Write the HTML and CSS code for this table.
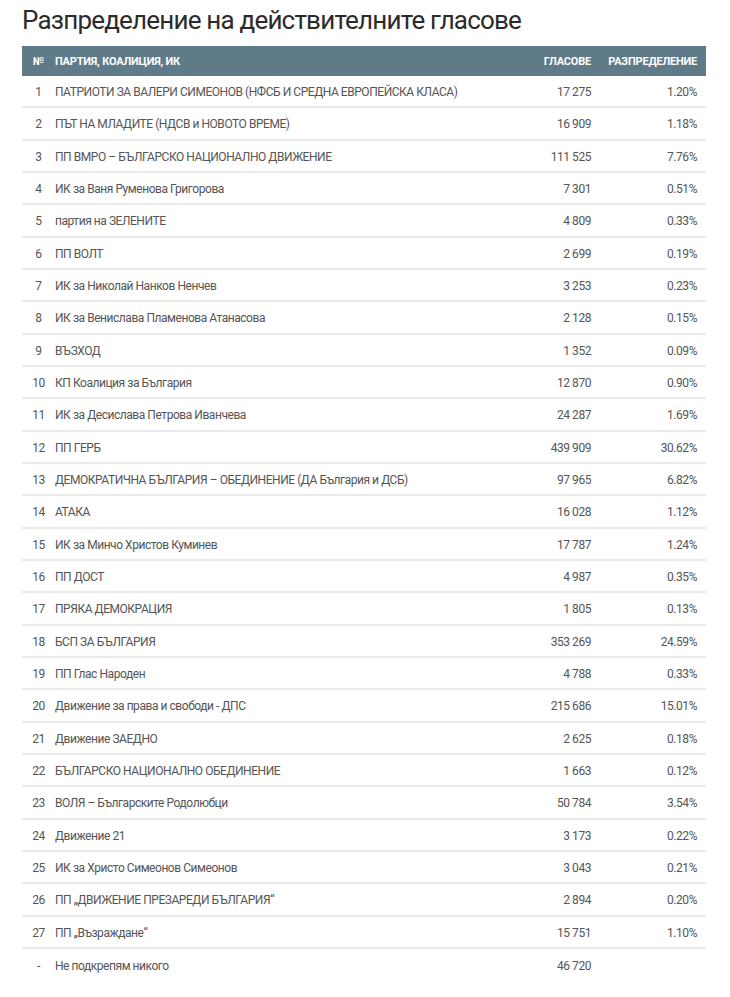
FILE: index.html
```html
<!DOCTYPE html>
<html lang="bg">
<head>
<meta charset="utf-8">
<title>Разпределение на действителните гласове</title>
<link rel="stylesheet" href="styles.css">
</head>
<body>
<div class="wrap">
  <h1 class="title">Разпределение на действителните гласове</h1>
  <table class="votes">
    <thead>
      <tr><th class="num">№</th><th class="party">Партия, коалиция, ИК</th><th class="cnt">Гласове</th><th class="pct">Разпределение</th></tr>
    </thead>
    <tbody>
      <tr><td class="num">1</td><td class="party">ПАТРИОТИ ЗА ВАЛЕРИ СИМЕОНОВ (НФСБ И СРЕДНА ЕВРОПЕЙСКА КЛАСА)</td><td class="cnt">17 275</td><td class="pct">1.20%</td></tr>
      <tr><td class="num">2</td><td class="party">ПЪТ НА МЛАДИТЕ (НДСВ и НОВОТО ВРЕМЕ)</td><td class="cnt">16 909</td><td class="pct">1.18%</td></tr>
      <tr><td class="num">3</td><td class="party">ПП ВМРО – БЪЛГАРСКО НАЦИОНАЛНО ДВИЖЕНИЕ</td><td class="cnt">111 525</td><td class="pct">7.76%</td></tr>
      <tr><td class="num">4</td><td class="party">ИК за Ваня Руменова Григорова</td><td class="cnt">7 301</td><td class="pct">0.51%</td></tr>
      <tr><td class="num">5</td><td class="party">партия на ЗЕЛЕНИТЕ</td><td class="cnt">4 809</td><td class="pct">0.33%</td></tr>
      <tr><td class="num">6</td><td class="party">ПП ВОЛТ</td><td class="cnt">2 699</td><td class="pct">0.19%</td></tr>
      <tr><td class="num">7</td><td class="party">ИК за Николай Нанков Ненчев</td><td class="cnt">3 253</td><td class="pct">0.23%</td></tr>
      <tr><td class="num">8</td><td class="party">ИК за Венислава Пламенова Атанасова</td><td class="cnt">2 128</td><td class="pct">0.15%</td></tr>
      <tr><td class="num">9</td><td class="party">ВЪЗХОД</td><td class="cnt">1 352</td><td class="pct">0.09%</td></tr>
      <tr><td class="num">10</td><td class="party">КП Коалиция за България</td><td class="cnt">12 870</td><td class="pct">0.90%</td></tr>
      <tr><td class="num">11</td><td class="party">ИК за Десислава Петрова Иванчева</td><td class="cnt">24 287</td><td class="pct">1.69%</td></tr>
      <tr><td class="num">12</td><td class="party">ПП ГЕРБ</td><td class="cnt">439 909</td><td class="pct">30.62%</td></tr>
      <tr><td class="num">13</td><td class="party">ДЕМОКРАТИЧНА БЪЛГАРИЯ – ОБЕДИНЕНИЕ (ДА България и ДСБ)</td><td class="cnt">97 965</td><td class="pct">6.82%</td></tr>
      <tr><td class="num">14</td><td class="party">АТАКА</td><td class="cnt">16 028</td><td class="pct">1.12%</td></tr>
      <tr><td class="num">15</td><td class="party">ИК за Минчо Христов Куминев</td><td class="cnt">17 787</td><td class="pct">1.24%</td></tr>
      <tr><td class="num">16</td><td class="party">ПП ДОСТ</td><td class="cnt">4 987</td><td class="pct">0.35%</td></tr>
      <tr><td class="num">17</td><td class="party">ПРЯКА ДЕМОКРАЦИЯ</td><td class="cnt">1 805</td><td class="pct">0.13%</td></tr>
      <tr><td class="num">18</td><td class="party">БСП ЗА БЪЛГАРИЯ</td><td class="cnt">353 269</td><td class="pct">24.59%</td></tr>
      <tr><td class="num">19</td><td class="party">ПП Глас Народен</td><td class="cnt">4 788</td><td class="pct">0.33%</td></tr>
      <tr><td class="num">20</td><td class="party">Движение за права и свободи - ДПС</td><td class="cnt">215 686</td><td class="pct">15.01%</td></tr>
      <tr><td class="num">21</td><td class="party">Движение ЗАЕДНО</td><td class="cnt">2 625</td><td class="pct">0.18%</td></tr>
      <tr><td class="num">22</td><td class="party">БЪЛГАРСКО НАЦИОНАЛНО ОБЕДИНЕНИЕ</td><td class="cnt">1 663</td><td class="pct">0.12%</td></tr>
      <tr><td class="num">23</td><td class="party">ВОЛЯ – Българските Родолюбци</td><td class="cnt">50 784</td><td class="pct">3.54%</td></tr>
      <tr><td class="num">24</td><td class="party">Движение 21</td><td class="cnt">3 173</td><td class="pct">0.22%</td></tr>
      <tr><td class="num">25</td><td class="party">ИК за Христо Симеонов Симеонов</td><td class="cnt">3 043</td><td class="pct">0.21%</td></tr>
      <tr><td class="num">26</td><td class="party">ПП „ДВИЖЕНИЕ ПРЕЗАРЕДИ БЪЛГАРИЯ“</td><td class="cnt">2 894</td><td class="pct">0.20%</td></tr>
      <tr><td class="num">27</td><td class="party">ПП „Възраждане“</td><td class="cnt">15 751</td><td class="pct">1.10%</td></tr>
      <tr class="last"><td class="num">-</td><td class="party">Не подкрепям никого</td><td class="cnt">46 720</td><td class="pct"></td></tr>
    </tbody>
  </table>
</div>
</body>
</html>
```

FILE: styles.css
```css
html, body {
  margin: 0;
  padding: 0;
  background: #ffffff;
}

.wrap {
  margin-left: 22px;
  width: 684px;
  font-family: Roboto, "Noto Sans", "Liberation Sans", sans-serif;
}

.title {
  margin: 0;
  padding-top: 5px;
  height: 46px;
  font-size: 26px;
  line-height: 30px;
  font-weight: 400;
  color: #2b2b2b;
  letter-spacing: -0.8px;
  box-sizing: border-box;
  white-space: nowrap;
}

.votes {
  width: 684px;
  border-collapse: collapse;
  table-layout: fixed;
  font-size: 12px;
  letter-spacing: -0.45px;
  color: #555555;
}

.votes thead th {
  background: #5f7b89;
  color: #ffffff;
  height: 30px;
  padding: 0;
  font-size: 11px;
  font-weight: 700;
  text-transform: uppercase;
  letter-spacing: -0.2px;
  vertical-align: middle;
}

.votes td {
  height: 28.33px;
  padding: 2px 0 0 0;
  border-bottom: 2px solid #e9e9e9;
  vertical-align: middle;
  white-space: nowrap;
}

.votes tr.last td {
  border-bottom: none;
  height: 30px;
}

.num {
  width: 33px;
  text-align: center;
}

.party {
  text-align: left;
}

.cnt {
  width: 110px;
  text-align: right;
}

.pct {
  width: 106px;
  text-align: right;
}

.votes th.pct,
.votes td.pct {
  padding-right: 9px;
}
```
